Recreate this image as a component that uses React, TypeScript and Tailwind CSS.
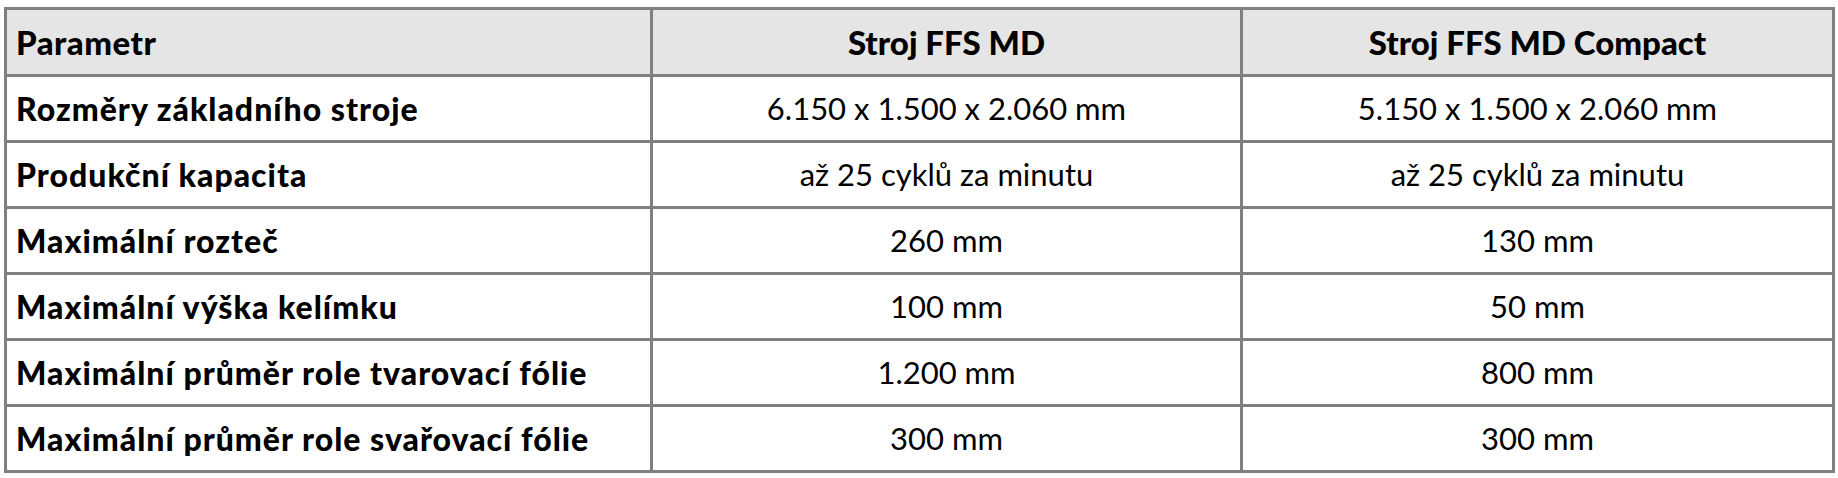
const rows = [
  ['Rozměry základního stroje', '6.150 x 1.500 x 2.060 mm', '5.150 x 1.500 x 2.060 mm'],
  ['Produkční kapacita', 'až 25 cyklů za minutu', 'až 25 cyklů za minutu'],
  ['Maximální rozteč', '260 mm', '130 mm'],
  ['Maximální výška kelímku', '100 mm', '50 mm'],
  ['Maximální průměr role tvarovací fólie', '1.200 mm', '800 mm'],
  ['Maximální průměr role svařovací fólie', '300 mm', '300 mm'],
]

export default function App() {
  return (
    <div className="w-[1838px] h-[478px] bg-white pl-[4px] pt-[7px] font-['Lato',sans-serif] text-black">
      <table className="w-[1828px] table-fixed border-collapse">
        <colgroup>
          <col className="w-[646px]" />
          <col className="w-[590px]" />
          <col className="w-[592px]" />
        </colgroup>
        <thead>
          <tr className="h-[67px] bg-[#e5e5e5]">
            <th className="border-[3px] border-[#808080] px-[9px] text-left text-[33px] leading-none font-black tracking-[0.5px]">
              Parametr
            </th>
            <th className="border-[3px] border-[#808080] px-[9px] text-center text-[33px] leading-none font-black">
              Stroj FFS MD
            </th>
            <th className="border-[3px] border-[#808080] px-[9px] text-center text-[33px] leading-none font-black">
              Stroj FFS MD Compact
            </th>
          </tr>
        </thead>
        <tbody>
          {rows.map((r) => (
            <tr key={r[0]} className="h-[66px]">
              <td className="border-[3px] border-[#808080] px-[9px] text-left text-[32px] leading-none font-black tracking-[1px]">
                {r[0]}
              </td>
              <td className="border-[3px] border-[#808080] px-[9px] text-center text-[31px] leading-none">
                {r[1]}
              </td>
              <td className="border-[3px] border-[#808080] px-[9px] text-center text-[31px] leading-none">
                {r[2]}
              </td>
            </tr>
          ))}
        </tbody>
      </table>
    </div>
  )
}
